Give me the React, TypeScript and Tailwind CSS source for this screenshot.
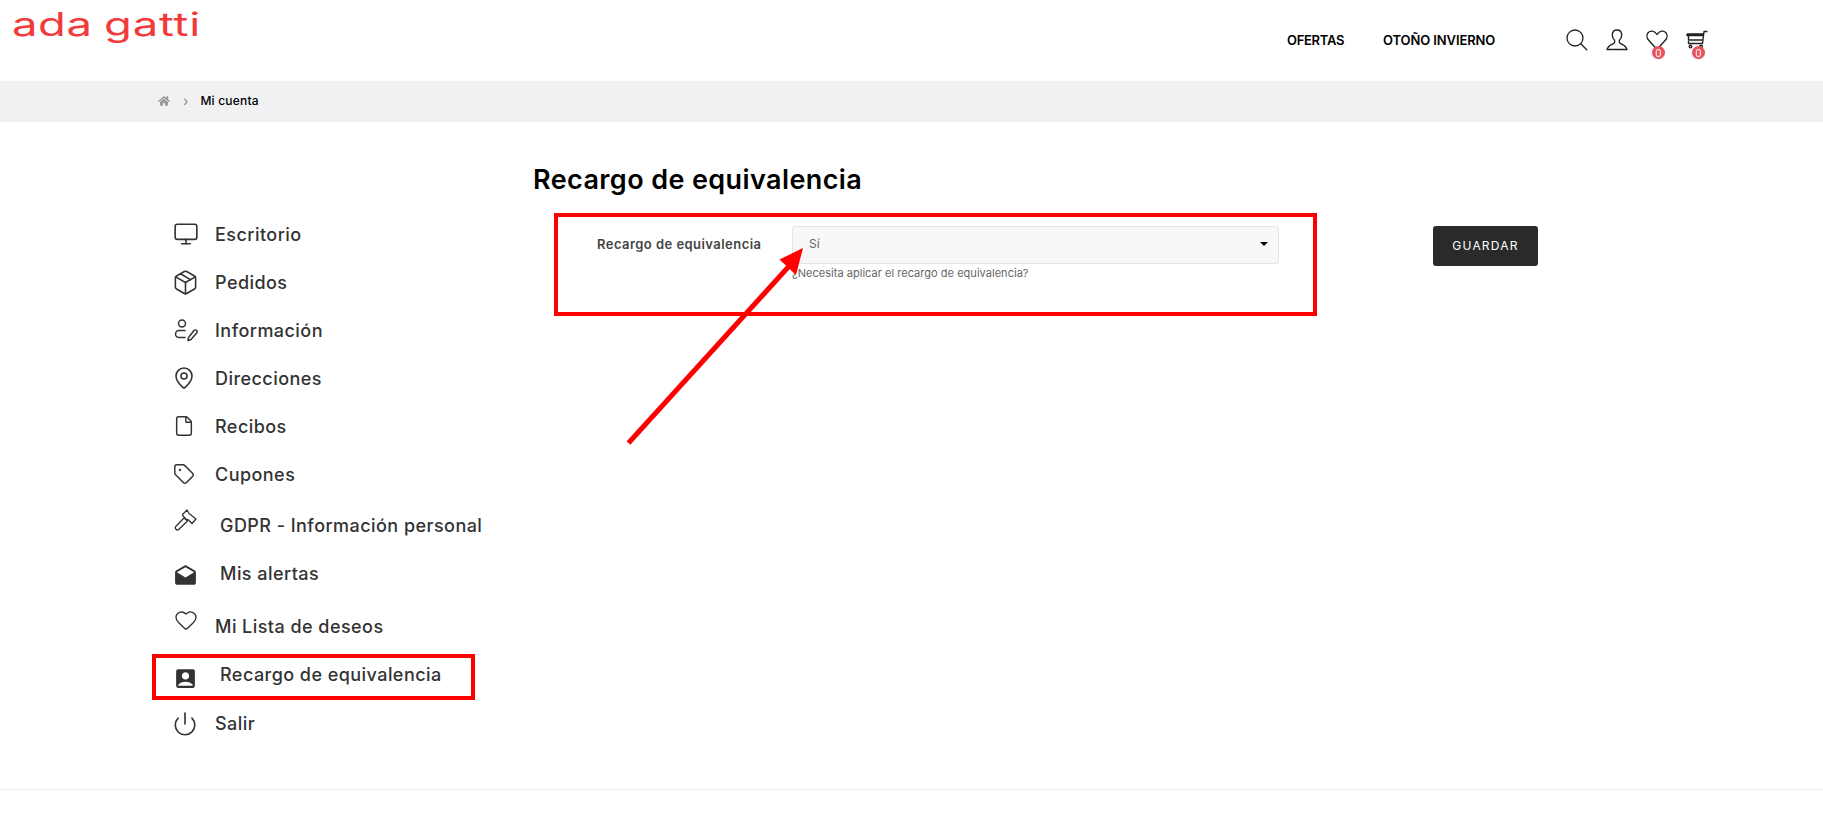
import React from 'react';
import { Monitor, Package, MapPin, File, Tag, Heart, Power } from 'lucide-react';
import { FaHome } from 'react-icons/fa';
import { MdAccountBox, MdDrafts } from 'react-icons/md';

const font = "font-['Inter','Liberation_Sans',sans-serif]";

const UserEditIcon = () => (
  <svg width="24" height="24" viewBox="0 0 24 24" fill="none" stroke="currentColor" strokeWidth="1.5" strokeLinecap="round" strokeLinejoin="round">
    <circle cx="8" cy="5.500" r="3.500" />
    <path d="M11 12.500H5a3.500 3.500 0 0 0 0 7h6" />
    <path d="M20 12.500a1.800 1.800 0 0 1 2.700 2.400L17 21.500l-3 1 .5-3z" />
  </svg>
);

const GavelIcon = () => (
  <svg width="24" height="24" viewBox="0 0 24 24" fill="none" stroke="currentColor" strokeWidth="1.3" strokeLinejoin="round">
    <path d="M13 3l2 3.500 7 5.500-4 4.500-3.500-3.500-2-.5-3.500-3.500-.5-1.500z" />
    <path d="M10 11l3.500 3-8.500 8.300a1.500 1.500 0 0 1-3-3z" />
  </svg>
);

const menu = [
  { label: 'Escritorio', icon: <Monitor size={26} strokeWidth={1.5} />, row: '', text: '', iconShift: '-ml-[1px]' },
  { label: 'Pedidos', icon: <Package size={27} strokeWidth={1.4} />, row: '', text: '', iconShift: '-ml-[2px]' },
  { label: 'Información', icon: <UserEditIcon />, row: '', text: '' },
  { label: 'Direcciones', icon: <MapPin size={24} strokeWidth={1.6} />, row: '', text: '', iconShift: '-ml-[2px]' },
  { label: 'Recibos', icon: <File size={22} strokeWidth={1.6} />, row: '', text: '', iconShift: '-ml-[1px]' },
  { label: 'Cupones', icon: <Tag size={22} strokeWidth={1.6} />, row: '', text: '', iconShift: '-ml-[1px]' },
  { label: 'GDPR - Información personal', icon: <GavelIcon />, row: 'mt-[3px]', text: 'ml-[5px]', iconShift: '-mt-[13px]' },
  { label: 'Mis alertas', icon: <MdDrafts size={25} />, row: '', text: 'ml-[5px]', iconShift: '-ml-px mt-[7px]' },
  { label: 'Mi Lista de deseos', icon: <Heart size={24} strokeWidth={1.4} />, row: 'mt-[5px]', text: '', iconShift: '-mt-[12px]' },
  { label: 'Recargo de equivalencia', icon: <MdAccountBox size={25} />, row: '', text: 'ml-[5px]', iconShift: '-ml-px mt-[8px]' },
  { label: 'Salir', icon: <Power size={26} strokeWidth={1.5} />, row: 'mt-px', text: '', iconShift: '-ml-[2px] mt-[2px]' },
];

const Badge = () => (
  <span className="absolute left-[6px] top-[17px] flex h-[13px] w-[13px] items-center justify-center rounded-full bg-[#e8505b] text-[10px] leading-none text-white shadow">
    0
  </span>
);

export default function App() {
  return (
    <div className={`relative h-[818px] overflow-hidden bg-white ${font} text-[#333]`}>
      {/* Header */}
      <header className="flex h-[81px] items-start pl-[14px]">
        <div className="mt-[2px] h-[50px] w-[185px] whitespace-nowrap text-[#f23a3a]">
          <div className="-ml-[2px] w-[130px] origin-top-left scale-x-[1.42] text-[32px] font-normal leading-[46px]">
            <span className="tracking-[0.4px]">ada</span>
            <span className="ml-[8px] tracking-[0.6px]">gatti</span>
          </div>
        </div>
        <nav className="ml-[1088px] mt-[31px] flex gap-[40px] text-[13px] font-semibold leading-[18px] text-black">
          <span className="w-[56px] whitespace-nowrap tracking-[-0.3px]">OFERTAS</span>
          <span className="w-[111px] whitespace-nowrap tracking-[-0.1px]">OTOÑO INVIERNO</span>
        </nav>
        <div className="ml-[72px] mt-[29px] flex gap-[18px] text-[#222]">
          <svg width="22" height="22" viewBox="0 0 22 22" fill="none" stroke="currentColor" strokeWidth="1.3">
            <circle cx="9" cy="9" r="8" />
            <path d="M14.800 14.800l6.400 6.400" />
          </svg>
          <svg width="22" height="22" viewBox="0 0 22 22" fill="none" stroke="currentColor" strokeWidth="1.4" strokeLinejoin="round">
            <path d="M11 1C8 1 6.300 3 6.300 6c0 2.200.9 4 2.200 5 .4 1.200.3 2.400-.5 3.200-1.400 1.200-5.800 2-7 6.300h20c-1.200-4.300-5.600-5.100-7-6.300-.8-.8-.9-2-.5-3.200 1.300-1 2.200-2.800 2.200-5C15.700 3 14 1 11 1z" />
          </svg>
          <div className="relative h-[22px] w-[22px]">
            <svg width="22" height="22" viewBox="0 0 22 22" fill="none" stroke="currentColor" strokeWidth="1.4" strokeLinejoin="round">
              <path d="M11 20.500L2.500 11C.5 8.800.5 5.500 2.300 3.500 4.300 1.300 8.500 1.500 11 5.500c2.500-4 6.700-4.200 8.700-2 1.800 2 1.800 5.300-.2 7.500z" />
            </svg>
            <Badge />
          </div>
          <div className="relative h-[22px] w-[22px]">
            <svg width="22" height="22" viewBox="0 0 22 22" fill="none" stroke="currentColor" strokeWidth="1.4" strokeLinejoin="round">
              <path d="M21.500 2.500H18L16.500 14.500H2.500V12" />
              <path d="M1 5h16.500M1 5v1.500h16.300M2.500 6.500V11h14.200" />
              <circle cx="4.500" cy="17.500" r="1.300" />
              <circle cx="15" cy="17.500" r="1.300" />
            </svg>
            <Badge />
          </div>
        </div>
      </header>

      {/* Breadcrumb */}
      <div className="flex h-[41px] items-center bg-[#f1f1f3] pb-[2px] pl-[158px] text-[12px]">
        <FaHome size={12} className="text-[#999]" />
        <span className="ml-[13px] text-[14px] leading-none text-[#888]">›</span>
        <span className="ml-[12px] font-medium tracking-[0.2px] text-black">Mi cuenta</span>
      </div>

      {/* Content */}
      <main className="flex pl-[174px]">
        <ul className="mt-[88px] w-[359px] text-[18px] font-medium tracking-[0.45px] text-[#333]">
          {menu.map((item) => (
            <li key={item.label} className={`flex h-[48px] items-center ${item.row}`}>
              <span className="flex w-[41px] shrink-0 items-center">
                <span className={`flex ${item.iconShift ?? ''}`}>{item.icon}</span>
              </span>
              <span className={`whitespace-nowrap ${item.text}`}>{item.label}</span>
            </li>
          ))}
        </ul>
        <section className="flex-1">
          <h1 className="mt-[40px] text-[27px] font-semibold leading-[36px] tracking-[0.4px] text-black">Recargo de equivalencia</h1>
          <div className="mt-[28px] flex">
            <label className="ml-[64px] mt-[8px] w-[195px] whitespace-nowrap text-[13px] font-semibold leading-[20px] tracking-[0.45px] text-[#444]">
              Recargo de equivalencia
            </label>
            <div className="w-[487px]">
              <div className="flex h-[38px] items-center justify-between rounded-[3px] border border-[#e5e5e5] bg-[#f8f8f8] pb-[2px] pl-[16px] pr-[10px] text-[12px] text-[#666]">
                <span>Sí</span>
                <span className="h-0 w-0 border-x-[4px] border-t-[4px] border-x-transparent border-t-black" />
              </div>
              <p className="mt-[1px] text-[11px] leading-[16px] tracking-[0.03px] text-[#666]">¿Necesita aplicar el recargo de equivalencia?</p>
            </div>
            <button className="ml-[154px] flex h-[40px] w-[105px] items-center justify-center rounded-[3px] bg-[#2a2a2a] text-[12px] font-normal tracking-[1.2px] text-white">
              GUARDAR
            </button>
          </div>
        </section>
      </main>

      {/* Footer rule */}
      <div className="absolute left-0 right-0 top-[789px] h-px bg-[#ececec]" />

      {/* Annotations */}
      <div className="absolute left-[152px] top-[654px] h-[46px] w-[323px] border-4 border-[#ff0000]" />
      <div className="absolute left-[554px] top-[213px] h-[103px] w-[763px] border-4 border-[#ff0000]" />
      <svg className="absolute left-[620px] top-[240px]" width="200" height="210" viewBox="0 0 200 210" fill="none">
        <path d="M8.500 203L171 24" stroke="#ff0000" strokeWidth="5" />
        <path d="M183 8L159.500 19.500 176 35z" fill="#ff0000" />
      </svg>
    </div>
  );
}
